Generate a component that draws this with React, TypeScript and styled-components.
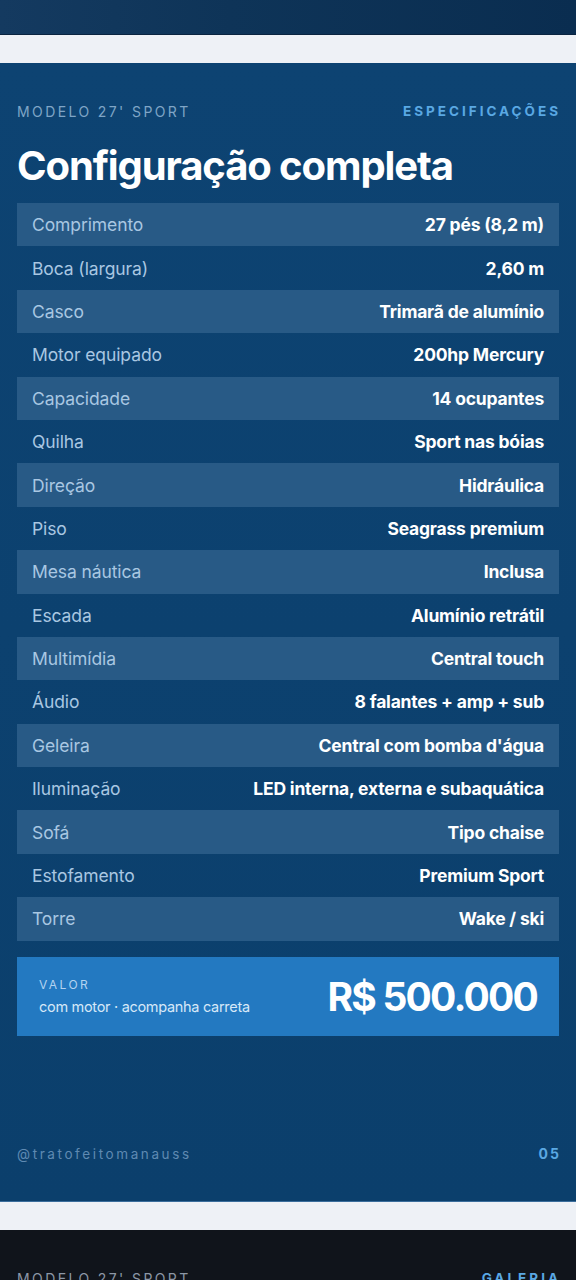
import React from "react";
import styled, { createGlobalStyle } from "styled-components";

const GlobalStyle = createGlobalStyle`
  html, body {
    margin: 0;
    padding: 0;
    background: #eef1f6;
    font-family: Inter, "Noto Sans", "Liberation Sans", sans-serif;
  }
  body {
    height: 1280px;
    overflow: hidden;
  }
`;

const Page = styled.div`
  display: flex;
  flex-direction: column;
  gap: 28px;
  width: 576px;
`;

const PrevSlide = styled.div`
  height: 34px;
  background: linear-gradient(90deg, #143a60 0%, #0e3458 40%, #0a2d50 100%);
  border-bottom: 1px solid #0a2440;
`;

const Slide = styled.section<{ $dark?: boolean }>`
  display: flex;
  flex-direction: column;
  box-sizing: border-box;
  height: ${(p) => (p.$dark ? "120px" : "1139px")};
  padding: 40px 17px 39px;
  background: ${(p) =>
    p.$dark ? "#10141b" : "linear-gradient(180deg, #0d4372 0%, #0b3f6c 100%)"};
  border-bottom: ${(p) => (p.$dark ? "none" : "1px solid #3b6e9c")};
`;

const TopRow = styled.div`
  display: flex;
  justify-content: space-between;
  align-items: center;
  height: 16px;
`;

const Kicker = styled.span<{ $dark?: boolean }>`
  font-size: 14px;
  letter-spacing: 2.4px;
  color: ${(p) => (p.$dark ? "#8c97a6" : "#7fa5c6")};
  text-transform: uppercase;
`;

const Section = styled.span`
  font-size: 13.5px;
  font-weight: 700;
  letter-spacing: 3px;
  color: #5aa8e3;
  text-transform: uppercase;
  margin-right: -2px;
`;

const Title = styled.h1`
  margin: 24px 0 0;
  font-size: 40px;
  font-weight: 700;
  letter-spacing: -1.1px;
  line-height: 46px;
  color: #ffffff;
`;

const Table = styled.div`
  display: flex;
  flex-direction: column;
  margin-top: 14px;
`;

const Row = styled.div<{ $striped: boolean }>`
  display: flex;
  justify-content: space-between;
  align-items: center;
  height: 43.4px;
  padding: 0 15px;
  background: ${(p) => (p.$striped ? "#285a86" : "transparent")};
`;

const Label = styled.span`
  font-size: 17.5px;
  color: #a9c7e2;
  letter-spacing: -0.1px;
`;

const Value = styled.span`
  font-size: 17.5px;
  font-weight: 700;
  color: #ffffff;
  letter-spacing: -0.2px;
`;

const PriceBox = styled.div`
  display: flex;
  justify-content: space-between;
  align-items: center;
  height: 79px;
  margin-top: 16px;
  padding: 0 22px;
  background: #2379c1;
  box-sizing: border-box;
`;

const PriceInfo = styled.div`
  display: flex;
  flex-direction: column;
  gap: 6px;
`;

const PriceKicker = styled.span`
  font-size: 12px;
  letter-spacing: 2.4px;
  color: #b3d3f0;
`;

const PriceNote = styled.span`
  font-size: 14.5px;
  color: #d6e8f8;
  letter-spacing: -0.3px;
`;

const Price = styled.span`
  font-size: 39px;
  font-weight: 700;
  letter-spacing: -1.8px;
  color: #ffffff;
`;

const Footer = styled.div`
  display: flex;
  justify-content: space-between;
  align-items: center;
  margin-top: auto;
`;

const Handle = styled.span`
  font-size: 13.5px;
  letter-spacing: 2.6px;
  color: #5f8ab2;
`;

const PageNum = styled.span`
  font-size: 14px;
  font-weight: 700;
  letter-spacing: 2px;
  color: #5aa8e3;
  margin-right: -2px;
`;

const specs: [string, string][] = [
  ["Comprimento", "27 pés (8,2 m)"],
  ["Boca (largura)", "2,60 m"],
  ["Casco", "Trimarã de alumínio"],
  ["Motor equipado", "200hp Mercury"],
  ["Capacidade", "14 ocupantes"],
  ["Quilha", "Sport nas bóias"],
  ["Direção", "Hidráulica"],
  ["Piso", "Seagrass premium"],
  ["Mesa náutica", "Inclusa"],
  ["Escada", "Alumínio retrátil"],
  ["Multimídia", "Central touch"],
  ["Áudio", "8 falantes + amp + sub"],
  ["Geleira", "Central com bomba d'água"],
  ["Iluminação", "LED interna, externa e subaquática"],
  ["Sofá", "Tipo chaise"],
  ["Estofamento", "Premium Sport"],
  ["Torre", "Wake / ski"],
];

export default function App() {
  return (
    <>
      <GlobalStyle />
      <Page>
        <PrevSlide />
        <Slide>
          <TopRow>
            <Kicker>Modelo 27' Sport</Kicker>
            <Section>Especificações</Section>
          </TopRow>
          <Title>Configuração completa</Title>
          <Table>
            {specs.map(([label, value], i) => (
              <Row key={label} $striped={i % 2 === 0}>
                <Label>{label}</Label>
                <Value>{value}</Value>
              </Row>
            ))}
          </Table>
          <PriceBox>
            <PriceInfo>
              <PriceKicker>VALOR</PriceKicker>
              <PriceNote>com motor · acompanha carreta</PriceNote>
            </PriceInfo>
            <Price>R$ 500.000</Price>
          </PriceBox>
          <Footer>
            <Handle>@tratofeitomanauss</Handle>
            <PageNum>05</PageNum>
          </Footer>
        </Slide>
        <Slide $dark>
          <TopRow>
            <Kicker $dark>Modelo 27' Sport</Kicker>
            <Section>Galeria</Section>
          </TopRow>
        </Slide>
      </Page>
    </>
  );
}
